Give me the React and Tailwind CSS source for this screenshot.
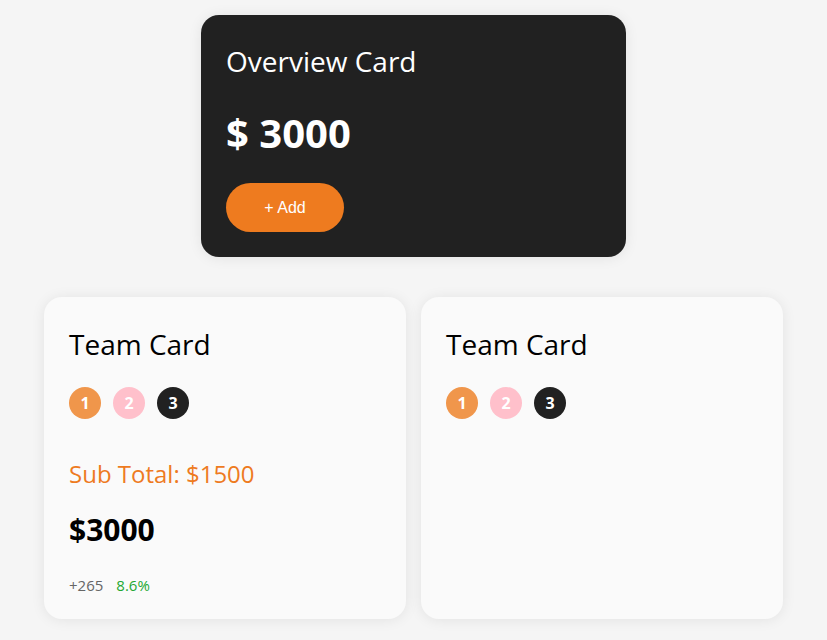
const badges = [
  { n: 1, bg: "bg-[#f0964b]" },
  { n: 2, bg: "bg-[#ffc0cb]" },
  { n: 3, bg: "bg-[#212121]" },
];

function Badges() {
  return (
    <div className="flex gap-3">
      {badges.map((b) => (
        <span
          key={b.n}
          className={`${b.bg} w-8 h-8 rounded-full flex items-center justify-center text-white font-bold text-base`}
        >
          {b.n}
        </span>
      ))}
    </div>
  );
}

function TeamCard({ children }) {
  return (
    <div className="w-[362px] h-[322px] bg-[#fafafa] rounded-[18px] shadow-[0_1px_14px_rgba(0,0,0,0.08)] px-[25px] py-6">
      <h2 className="text-[28px] leading-none mt-[9px] mb-[29px]">Team Card</h2>
      <Badges />
      {children}
    </div>
  );
}

export default function App() {
  return (
    <div className="min-h-screen bg-[#f5f5f5] pt-[15px] text-black" style={{ fontFamily: '"Open Sans", "Noto Sans", sans-serif' }}>
      {/* Overview */}
      <div className="flex justify-center">
        <div className="w-[425px] h-[242px] bg-[#212121] rounded-[18px] shadow-[0_1px_14px_rgba(0,0,0,0.08)] px-[25px] py-6 text-white">
          <h1 className="text-[28px] leading-none mt-[8px]">Overview Card</h1>
          <div className="text-[40px] font-bold leading-none mt-[38px]">$ 3000</div>
          <button
            className="mt-[30px] w-[118px] h-[49px] rounded-full bg-[#ee7b1f] text-white text-[16px]"
            style={{ fontFamily: '"Liberation Sans", Arial, sans-serif' }}
          >
            + Add
          </button>
        </div>
      </div>

      {/* Teams */}
      <div className="flex justify-center gap-[15px] mt-[40px]">
        <TeamCard>
          <div className="text-[24px] text-[#ee7b1f] leading-none mt-[43px]">Sub Total: $1500</div>
          <div className="text-[30px] font-bold leading-none mt-[29px]">$3000</div>
          <div className="flex gap-[13px] text-[15px] mt-[29px]">
            <span className="text-[#666]">+265</span>
            <span className="text-[#22a832]">8.6%</span>
          </div>
        </TeamCard>
        <TeamCard />
      </div>
    </div>
  );
}
